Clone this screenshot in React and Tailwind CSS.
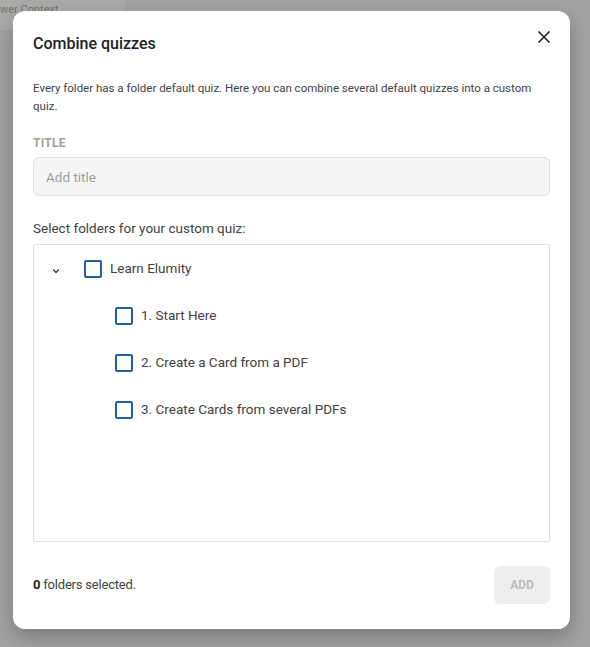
import React from 'react';

function Checkbox() {
  return <span className="block w-[18px] h-[18px] border-2 border-[#1f5fa8] rounded-[2px] bg-white shrink-0" />;
}

function Row({ label, indent }) {
  return (
    <div className={`flex items-center h-[47px] ${indent ? 'pl-[81px]' : 'pl-[17px]'}`}>
      {!indent && (
        <span className="w-[33px] flex items-center">
          <svg width="10" height="10" viewBox="0 0 10 10" className="mt-[4px]">
            <path d="M2 3.5 L5 6.5 L8 3.5" fill="none" stroke="#424242" strokeWidth="1.3" />
          </svg>
        </span>
      )}
      <Checkbox />
      <span className="ml-[8px] text-[13.5px] text-[#424242]">{label}</span>
    </div>
  );
}

export default function App() {
  return (
    <div className="relative w-[590px] h-[647px] bg-[#a2a2a2] overflow-hidden" style={{ fontFamily: 'Roboto, "Liberation Sans", sans-serif' }}>
      {/* background content peeking out */}
      <div className="absolute left-0 top-0 w-[125px] h-[30px] bg-[#aaaaaa]">
        <span className="absolute left-0 top-[2px] text-[11px] text-[#777]">wer Context</span>
      </div>

      <div className="absolute left-[13px] top-[11px] w-[557px] h-[618px] bg-white rounded-[12px] shadow-[0_8px_20px_rgba(0,0,0,0.25)] px-[20px] pt-[22px] flex flex-col">
        <div className="flex items-start justify-between">
          <h2 className="text-[16px] font-medium text-[#212121] leading-[22px]">Combine quizzes</h2>
          <svg width="14" height="14" viewBox="0 0 14 14" className="-mt-[3px] -mr-[1px]">
            <path d="M1.5 1.5 L12.5 12.5 M12.5 1.5 L1.5 12.5" stroke="#212121" strokeWidth="1.6" />
          </svg>
        </div>

        <p className="mt-[24px] text-[11.5px] leading-[18px] text-[#424242]">
          Every folder has a folder default quiz. Here you can combine several default quizzes into a custom quiz.
        </p>

        <label className="mt-[20px] text-[12px] font-bold text-[#9e9e9e] tracking-[0.02em] leading-[16px]">TITLE</label>
        <input
          placeholder="Add title"
          className="mt-[6px] h-[39px] w-full bg-[#f5f5f5] border border-[#e0e0e0] rounded-[6px] px-[12px] text-[13.5px] placeholder:text-[#9e9e9e] outline-none"
        />

        <div className="mt-[23px] text-[13.5px] text-[#424242] leading-[18px]">Select folders for your custom quiz:</div>

        <div className="mt-[7px] h-[298px] border border-[#e0e0e0] rounded-[2px]">
          <Row label="Learn Elumity" />
          <Row label="1. Start Here" indent />
          <Row label="2. Create a Card from a PDF" indent />
          <Row label="3. Create Cards from several PDFs" indent />
        </div>

        <div className="mt-[24px] flex items-center justify-between">
          <span className="text-[13px] tracking-[-0.2px] text-[#424242]"><b className="font-bold text-[#212121]">0</b> folders selected.</span>
          <button className="w-[56px] h-[38px] rounded-[6px] bg-[#eeeeee] text-[12px] font-bold text-[#bdbdbd]">ADD</button>
        </div>
      </div>
    </div>
  );
}
